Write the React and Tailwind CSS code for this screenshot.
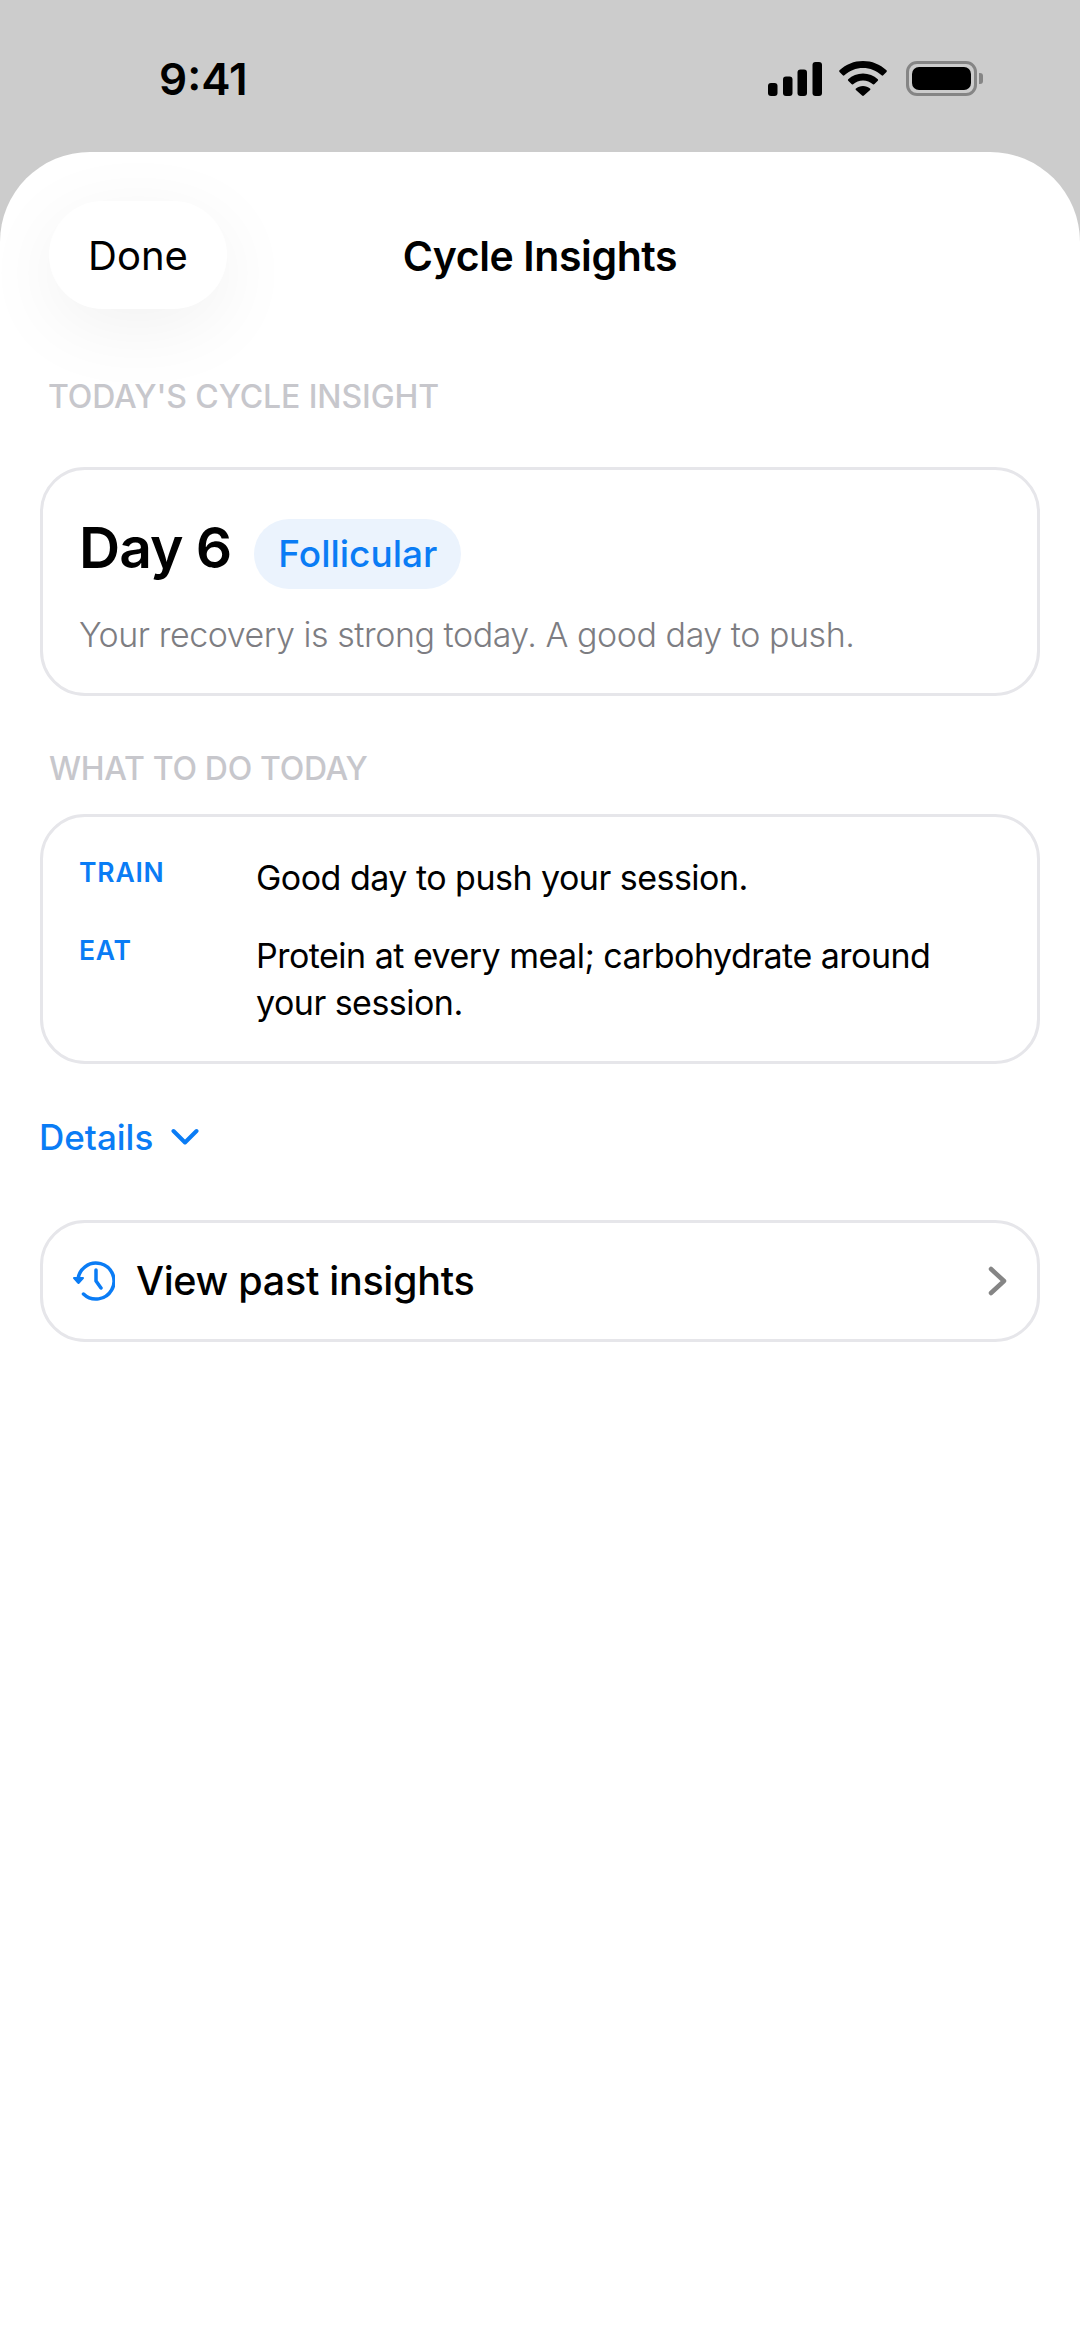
import React from "react";

function Signal() {
  return (
    <svg width="54" height="34" viewBox="0 0 54 34" fill="#000">
      <rect x="0" y="21" width="9.5" height="13" rx="3" />
      <rect x="15" y="14.5" width="9.5" height="19.5" rx="3" />
      <rect x="29.5" y="7.5" width="9.5" height="26.5" rx="3" />
      <rect x="44.5" y="0" width="9.5" height="34" rx="3" />
    </svg>
  );
}

function Wifi() {
  return (
    <svg width="48" height="35" viewBox="0 0 48 35" fill="#000">
      <path d="M24 0C15 0 7 3.3 0.5 9.3c-.5.5-.5 1.1 0 1.6l3.3 3.4c.5.5 1.1.5 1.6 0C10.400 9.700 17 7 24 7s13.600 2.700 18.600 7.300c.5.5 1.100.5 1.600 0l3.300-3.400c.5-.5.5-1.100 0-1.600C41 3.300 33 0 24 0z" />
      <path d="M24 12.500c-5.700 0-10.800 2.100-14.800 5.700-.5.5-.5 1.100 0 1.600l3.300 3.300c.5.5 1.100.5 1.600.1 2.700-2.300 6.100-3.700 9.900-3.700s7.200 1.400 9.900 3.700c.5.4 1.100.4 1.600-.1l3.300-3.300c.5-.5.5-1.100 0-1.600-4-3.600-9.100-5.700-14.800-5.700z" />
      <path d="M24 25c-2.700 0-5.200 1-7 2.600-.5.4-.5 1-.1 1.500l6.200 5.500c.5.5 1.300.5 1.800 0l6.200-5.500c.4-.5.4-1.100-.1-1.500-1.800-1.600-4.300-2.600-7-2.600z" />
    </svg>
  );
}

function Battery() {
  return (
    <div className="flex items-center gap-[2px] ml-[2px]">
      <div className="w-[71px] h-[35px] rounded-[11px] border-[3px] border-[#858585] p-[3px] flex">
        <div className="flex-1 rounded-[7px] bg-black" />
      </div>
      <div className="w-[4px] h-[11px] rounded-r-[3px] bg-[#858585]" />
    </div>
  );
}

function SectionLabel({ children, tracking }) {
  return (
    <div className={"text-[32px] leading-[40px] text-[#c7c7cc] font-medium " + tracking}>
      {children}
    </div>
  );
}

function Row({ label, children }) {
  return (
    <div className="flex">
      <div className="w-[177px] shrink-0 text-[26.500px] leading-[40px] font-semibold tracking-[0.8px] text-[#0a7cf5]">
        {label}
      </div>
      <div className="pt-[2px] text-[34px] leading-[47px] tracking-[-0.52px]">{children}</div>
    </div>
  );
}

export default function App() {
  return (
    <div className="w-[1080px] h-[2347px] bg-[#cccccc] overflow-hidden font-['Inter',sans-serif] text-black">
      <div className="h-[152px] flex items-start justify-between pt-[56px] pl-[159px] pr-[97px]">
        <span className="text-[44px] leading-[46px] font-semibold">9:41</span>
        <div className="flex items-center gap-[17px] pt-[5px]">
          <Signal />
          <Wifi />
          <Battery />
        </div>
      </div>

      <div className="h-[2195px] bg-white rounded-t-[90px] flex flex-col">
        <div className="relative h-[225px] shrink-0 flex justify-center items-start pt-[74px]">
          <div className="absolute left-[49px] top-[49px] w-[178px] h-[108px] rounded-[54px] bg-white shadow-[0_18px_80px_rgba(0,0,0,0.06)] flex items-center justify-center pt-[2px] text-[40px] font-normal">
            Done
          </div>
          <h1 className="relative text-[41px] leading-[60px] font-semibold tracking-[-0.4px]">Cycle Insights</h1>
        </div>

        <div className="pl-[48px]">
          <SectionLabel tracking="tracking-[-0.1px]">TODAY'S CYCLE INSIGHT</SectionLabel>
        </div>

        <div className="mx-[40px] mt-[50px] h-[229px] rounded-[45px] border-[3px] border-[#e6e6ea] pl-[36px] pt-[43px] bg-white">
          <div className="flex items-center gap-[23px] h-[70px]">
            <span className="text-[57px] leading-[70px] font-semibold tracking-[-1px]">Day 6</span>
            <span className="h-[70px] mt-[12px] rounded-[35px] bg-[#ebf3fd] px-[24px] flex items-center text-[37px] font-medium text-[#0a7cf5]">
              Follicular
            </span>
          </div>
          <p className="mt-[28px] text-[34px] leading-[48px] font-light text-[#7d7d82] tracking-[-0.46px]">
            Your recovery is strong today. A good day to push.
          </p>
        </div>

        <div className="pl-[49px] mt-[53px]">
          <SectionLabel tracking="tracking-[-0.3px]">WHAT TO DO TODAY</SectionLabel>
        </div>

        <div className="mx-[40px] mt-[25px] h-[250px] rounded-[45px] border-[3px] border-[#e6e6ea] pl-[36px] pr-[60px] pt-[35px] flex flex-col gap-[29px]">
          <Row label="TRAIN">Good day to push your session.</Row>
          <Row label="EAT">Protein at every meal; carbohydrate around your session.</Row>
        </div>

        <div className="flex items-center gap-[18px] ml-[39px] mt-[50px] h-[46px] text-[35px] font-medium text-[#0a7cf5]">
          <span>Details</span>
          <svg width="28" height="18" viewBox="0 0 28 18" fill="none" stroke="#0a7cf5" strokeWidth="4" strokeLinecap="round" strokeLinejoin="round">
            <path d="M2.500 3l11.500 11.500L25.500 3" />
          </svg>
        </div>

        <div className="mx-[40px] mt-[60px] h-[122px] rounded-[45px] border-[3px] border-[#e6e6ea] flex items-center pl-[30px] pr-[29px]">
          <svg width="42" height="40" viewBox="0 0 42 40" fill="none" stroke="#0a7cf5" strokeWidth="3.500" strokeLinecap="round" strokeLinejoin="round">
            <path d="M5 20a18 18 0 1 1 5.500 13" />
            <path d="M23 9v11l5 7" />
            <path d="M1 17l4.500 5 4.500-5z" fill="#0a7cf5" strokeWidth="2" />
          </svg>
          <span className="ml-[21px] pt-[2px] text-[39.500px] font-medium tracking-[-0.3px] flex-1">View past insights</span>
          <svg width="20" height="30" viewBox="0 0 20 30" fill="none" stroke="#858585" strokeWidth="4.500" strokeLinecap="round" strokeLinejoin="round">
            <path d="M3 3l13 12-13 12" />
          </svg>
        </div>
      </div>
    </div>
  );
}
